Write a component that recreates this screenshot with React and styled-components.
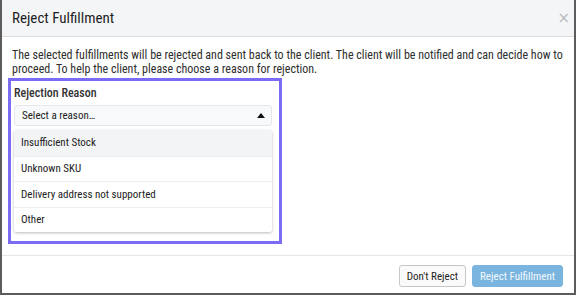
import React from 'react';
import styled, { createGlobalStyle } from 'styled-components';

const GlobalStyle = createGlobalStyle`
  html, body {
    margin: 0;
    padding: 0;
    background: #ffffff;
  }
  * {
    box-sizing: border-box;
  }
  body {
    font-family: Roboto, "Liberation Sans", Arial, sans-serif;
    font-stretch: 87%;
    color: #333;
  }
`;

// Whole modal window
const Modal = styled.div`
  width: 576px;
  height: 295px;
  display: flex;
  flex-direction: column;
  background: #fff;
  border-left: 2px solid #5c5c5c;
  border-right: 2px solid #5c5c5c;
  border-bottom: 2px solid #5c5c5c;
`;

const Header = styled.div`
  height: 37px;
  flex: none;
  display: flex;
  align-items: center;
  justify-content: space-between;
  padding: 0 4px 0 10px;
  background: #f4f5f6;
  border-bottom: 1px solid #dcdde0;
`;

const Title = styled.h2`
  margin: 0;
  font-size: 15px;
  font-weight: 400;
  color: #1e1e1e;
`;

const Close = styled.button`
  border: none;
  background: none;
  padding: 0;
  font-size: 15px;
  line-height: 1;
  color: #b9bcc0;
  font-family: "DejaVu Sans", sans-serif;
`;

const Body = styled.div`
  flex: 1;
  padding: 11px 10px 0 10px;
`;

const Intro = styled.p`
  margin: 0 0 2px 0;
  font-size: 12px;
  line-height: 14px;
  color: #2e2e2e;
`;

// Highlight frame around the field
const Highlight = styled.div`
  width: 274px;
  margin-left: -4px;
  border: 3px solid #7a6cf4;
  padding: 3px 7px 9px 3px;
`;

const Label = styled.div`
  font-size: 12px;
  font-weight: 500;
  color: #333;
  height: 18px;
  display: flex;
  align-items: center;
  margin-bottom: 3px;
`;

const SelectBox = styled.div`
  height: 21px;
  display: flex;
  align-items: center;
  justify-content: space-between;
  padding: 0 6px 0 7px;
  background: #f8f9fa;
  border: 1px solid #e6e8ea;
  border-radius: 3px;
  font-size: 11px;
  color: #222;
`;

const Caret = styled.span`
  width: 0;
  height: 0;
  border-left: 4px solid transparent;
  border-right: 4px solid transparent;
  border-bottom: 5px solid #111;
`;

const Menu = styled.ul`
  list-style: none;
  margin: 4px 0 0 0;
  padding: 0;
  background: #fff;
  border-radius: 3px;
  box-shadow: 0 1px 3px rgba(0, 0, 0, 0.28);
  overflow: hidden;
`;

const Option = styled.li`
  height: 25.5px;
  display: flex;
  align-items: center;
  padding: 0 7px;
  font-size: 11px;
  color: #222;
  background: ${p => (p.$active ? '#f3f4f5' : '#fff')};
  border-top: ${p => (p.$first ? 'none' : '1px solid #eeeff1')};
`;

const Footer = styled.div`
  height: 38px;
  flex: none;
  display: flex;
  align-items: flex-end;
  justify-content: flex-end;
  gap: 6px;
  padding: 0 11px 6px 0;
  border-top: 1px solid #e6e7e9;
`;

const Button = styled.button`
  height: 22px;
  padding: 0 7px;
  font-family: Roboto, "Liberation Sans", Arial, sans-serif;
  font-stretch: 87%;
  font-size: 11px;
  border-radius: 3px;
  border: 1px solid ${p => (p.$primary ? '#7ab5df' : '#c4c7cb')};
  background: ${p => (p.$primary ? '#7ab5df' : '#fafafa')};
  color: ${p => (p.$primary ? '#f2f8fc' : '#1e1e1e')};
`;

const reasons = [
  'Insufficient Stock',
  'Unknown SKU',
  'Delivery address not supported',
  'Other',
];

export default function App() {
  return (
    <>
      <GlobalStyle />
      <Modal>
        <Header>
          <Title>Reject Fulfillment</Title>
          <Close aria-label="Close">×</Close>
        </Header>
        <Body>
          <Intro>
            The selected fulfillments will be rejected and sent back to the client. The client will be notified and can decide how to
            proceed. To help the client, please choose a reason for rejection.
          </Intro>
          <Highlight>
            <Label>Rejection Reason</Label>
            <SelectBox>
              <span>Select a reason…</span>
              <Caret />
            </SelectBox>
            <Menu>
              {reasons.map((r, i) => (
                <Option key={r} $first={i === 0} $active={i === 0}>
                  {r}
                </Option>
              ))}
            </Menu>
          </Highlight>
        </Body>
        <Footer>
          <Button>Don't Reject</Button>
          <Button $primary>Reject Fulfillment</Button>
        </Footer>
      </Modal>
    </>
  );
}
